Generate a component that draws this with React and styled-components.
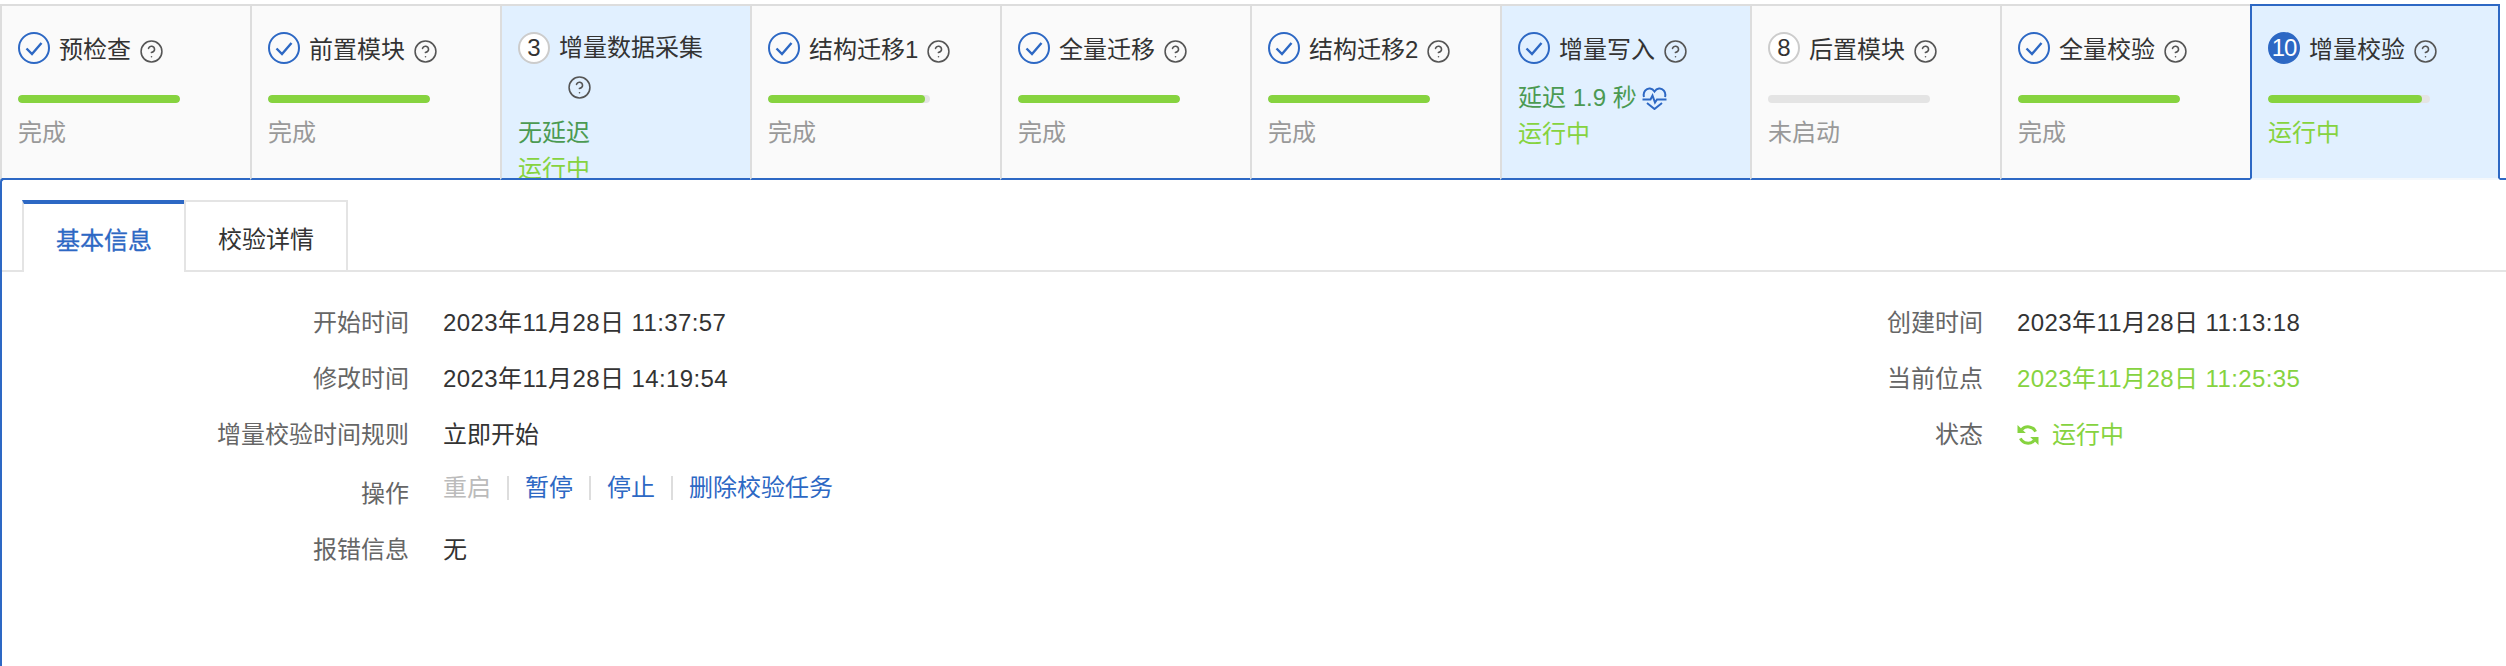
import React from 'react';
import styled, { createGlobalStyle } from 'styled-components';
import { CircleHelp } from 'lucide-react';

const BLUE = '#2d68c4';
const GREEN = '#86d33f';

const GlobalStyle = createGlobalStyle`
  html, body { margin: 0; padding: 0; background: #fff; }
  body {
    font-family: "Liberation Sans", "Noto Sans CJK SC", sans-serif;
    font-size: 24px;
    color: #333;
  }
`;

const Page = styled.div`
  display: flex;
  flex-direction: column;
  height: 666px;
  overflow: hidden;
  padding-top: 4px;
  box-sizing: border-box;
`;

const StepRow = styled.div`
  display: flex;
  flex: 0 0 176px;
  position: relative;
  z-index: 1;
`;

const Step = styled.div`
  flex: 0 0 250px;
  box-sizing: border-box;
  height: 176px;
  overflow: hidden;
  padding: 26px 0 0 16px;
  border-style: solid;
  border-width: 2px ${p => (p.$selected ? '2px' : '0')} 2px 2px;
  border-color: ${p => (p.$selected ? `${BLUE} ${BLUE} #f4f8fc ${BLUE}` : `#ddd #ddd ${BLUE} #ddd`)};
  background: ${p => (p.$running ? '#e1f0ff' : '#fafafa')};
`;

const StepHead = styled.div`
  display: flex;
  align-items: flex-start;
  margin-bottom: ${p => (p.$wrapped ? '10px' : '11px')};
`;

const Badge = styled.span`
  flex: 0 0 32px;
  width: 32px;
  height: 32px;
  box-sizing: border-box;
  border-radius: 50%;
  display: flex;
  align-items: center;
  justify-content: center;
  font-size: 24px;
  letter-spacing: ${p => (p.$filled ? '-1px' : '0')};
  color: ${p => (p.$filled ? '#fff' : '#333')};
  background: ${p => (p.$filled ? BLUE : '#fff')};
  border: 2px solid ${p => (p.$filled ? BLUE : '#ccc')};
`;

const CheckBadge = styled.svg`
  flex: 0 0 32px;
  width: 32px;
  height: 32px;
`;

const StepTitle = styled.div`
  margin: ${p => (p.$wrapped ? '-3px' : '-1px')} 0 0 9px;
  max-width: 165px;
  line-height: 38px;
  color: #333;
`;

const HelpIcon = styled(CircleHelp)`
  display: inline-block;
  vertical-align: -6px;
  margin-left: 8px;
  color: #555;
`;

const BarRow = styled.div`
  height: 35px;
  box-sizing: border-box;
  padding-top: 15px;
`;

const BarTrack = styled.div`
  width: 162px;
  height: 8px;
  border-radius: 4px;
  background: #e4e4e4;
  overflow: hidden;
`;

const BarFill = styled.div`
  height: 100%;
  border-radius: 4px;
  background: ${GREEN};
`;

const DelayRow = styled.div`
  display: flex;
  align-items: center;
  height: 36px;
  line-height: 36px;
  color: #4b9a52;
`;

const HeartIcon = styled.svg`
  width: 25px;
  height: 23px;
  margin-left: 5px;
  flex: none;
`;

const StepStatus = styled.div`
  line-height: 36px;
  color: ${p => p.$color};
`;

const Panel = styled.div`
  flex: 1;
  margin-top: -2px;
  border-top: 2px solid ${BLUE};
  border-left: 2px solid ${BLUE};
  border-top-left-radius: 4px;
  padding-top: 20px;
`;

const TabBar = styled.div`
  display: flex;
  height: 70px;
  padding-left: 20px;
  border-bottom: 2px solid #e4e4e4;
`;

const Tab = styled.div`
  flex: 0 0 ${p => p.$width}px;
  box-sizing: border-box;
  height: ${p => (p.$active ? '72px' : '70px')};
  display: flex;
  align-items: center;
  justify-content: center;
  border-style: solid;
  border-color: ${p => (p.$active ? `${BLUE} transparent #fff #e4e4e4` : '#e4e4e4')};
  border-width: ${p => (p.$active ? '4px 0 0 2px' : '2px 2px 0 2px')};
  padding-top: ${p => (p.$active ? '0' : '2px')};
  background: #fff;
  color: ${p => (p.$active ? BLUE : '#333')};
  -webkit-text-stroke: ${p => (p.$active ? '0.3px' : '0')};
`;

const Details = styled.div`
  display: grid;
  grid-template-columns: 1252px 1fr;
  padding-top: 33px;
`;

const Column = styled.div`
  display: flex;
  flex-direction: column;
`;

const InfoRow = styled.div`
  display: flex;
  align-items: flex-start;
  margin-bottom: 20px;
  line-height: 36px;
`;

const Label = styled.div`
  flex: 0 0 ${p => p.$width}px;
  text-align: right;
  margin-top: ${p => p.$offset || 0}px;
  color: #666;
`;

const Value = styled.div`
  display: flex;
  align-items: center;
  margin-left: 34px;
  margin-top: ${p => p.$offset || 0}px;
  letter-spacing: ${p => (p.$date ? '0.4px' : '0')};
  color: ${p => p.$color || '#333'};
`;

const Action = styled.span`
  color: ${p => (p.$disabled ? '#bbb' : BLUE)};
`;

const ActionDivider = styled.span`
  width: 2px;
  height: 24px;
  margin: 0 16px;
  background: #ddd;
`;

const SyncIcon = styled.svg`
  width: 22px;
  height: 22px;
  margin-right: 13px;
  flex: none;
`;

const steps = [
  { name: '预检查', done: true, progress: 100, status: '完成' },
  { name: '前置模块', done: true, progress: 100, status: '完成' },
  { name: '增量数据采集', no: 3, wrapped: true, running: true, delay: '无延迟', status: '运行中' },
  { name: '结构迁移1', done: true, progress: 97, status: '完成' },
  { name: '全量迁移', done: true, progress: 100, status: '完成' },
  { name: '结构迁移2', done: true, progress: 100, status: '完成' },
  { name: '增量写入', done: true, running: true, delay: '延迟 1.9 秒', heart: true, status: '运行中' },
  { name: '后置模块', no: 8, progress: 0, status: '未启动' },
  { name: '全量校验', done: true, progress: 100, status: '完成' },
  { name: '增量校验', no: 10, filled: true, selected: true, running: true, progress: 95, status: '运行中' },
];

const Check = () => (
  <CheckBadge viewBox="0 0 32 32" fill="none">
    <circle cx="16" cy="16" r="15" stroke={BLUE} strokeWidth="2" />
    <path d="M8.5 16.5 L14 22 L23.5 11" stroke={BLUE} strokeWidth="2.4" />
  </CheckBadge>
);

const Heart = () => (
  <HeartIcon viewBox="0 0 25 23" fill="none" stroke={BLUE} strokeWidth="2">
    <path d="M2 10 C0.5 5 4.5 1 8 1.5 C10 1.8 11.5 3 12.5 4.5 C13.5 3 15 1.8 17 1.5 C20.5 1 24.5 5 23 10" />
    <path d="M0.5 12.5 H8.5 L10.5 8.5 L13 15.5 L15 12.5 H24.5" />
    <path d="M5 16 L12.5 22 L20 16" />
  </HeartIcon>
);

const Sync = () => (
  <SyncIcon viewBox="0 0 22 22" fill="none">
    <path d="M18.6 7.6 A8.4 8.4 0 0 0 4.8 5.6" stroke={GREEN} strokeWidth="3" />
    <path d="M0.5 1 L8.8 9 H0.5 Z" fill={GREEN} />
    <path d="M3.4 14.4 A8.4 8.4 0 0 0 17.2 16.4" stroke={GREEN} strokeWidth="3" />
    <path d="M21.5 21 L13.2 13 H21.5 Z" fill={GREEN} />
  </SyncIcon>
);

const statusColor = s => (s === '运行中' ? GREEN : '#999');

const StepCard = ({ step }) => (
  <Step $selected={step.selected} $running={step.running}>
    <StepHead $wrapped={step.wrapped}>
      {step.done ? <Check /> : <Badge $filled={step.filled}>{step.no}</Badge>}
      <StepTitle $wrapped={step.wrapped}>
        {step.name}
        <HelpIcon size={25} strokeWidth={1.5} />
      </StepTitle>
    </StepHead>
    {step.delay ? (
      <DelayRow>
        {step.delay}
        {step.heart && <Heart />}
      </DelayRow>
    ) : (
      <BarRow>
        <BarTrack>
          <BarFill style={{ width: `${step.progress}%` }} />
        </BarTrack>
      </BarRow>
    )}
    <StepStatus $color={statusColor(step.status)}>{step.status}</StepStatus>
  </Step>
);

export default function App() {
  return (
    <Page>
      <GlobalStyle />
      <StepRow>
        {steps.map(s => <StepCard key={s.name} step={s} />)}
      </StepRow>
      <Panel>
        <TabBar>
          <Tab $active $width={162}>基本信息</Tab>
          <Tab $width={164}>校验详情</Tab>
        </TabBar>
        <Details>
          <Column>
            <InfoRow><Label $width={407}>开始时间</Label><Value $date>2023年11月28日 11:37:57</Value></InfoRow>
            <InfoRow><Label $width={407}>修改时间</Label><Value $date>2023年11月28日 14:19:54</Value></InfoRow>
            <InfoRow><Label $width={407}>增量校验时间规则</Label><Value>立即开始</Value></InfoRow>
            <InfoRow>
              <Label $width={407} $offset={3}>操作</Label>
              <Value $offset={-3}>
                <Action $disabled>重启</Action>
                <ActionDivider />
                <Action>暂停</Action>
                <ActionDivider />
                <Action>停止</Action>
                <ActionDivider />
                <Action>删除校验任务</Action>
              </Value>
            </InfoRow>
            <InfoRow><Label $width={407}>报错信息</Label><Value>无</Value></InfoRow>
          </Column>
          <Column>
            <InfoRow><Label $width={729}>创建时间</Label><Value $date>2023年11月28日 11:13:18</Value></InfoRow>
            <InfoRow><Label $width={729}>当前位点</Label><Value $date $color={GREEN}>2023年11月28日 11:25:35</Value></InfoRow>
            <InfoRow><Label $width={729}>状态</Label><Value $color={GREEN}><Sync />运行中</Value></InfoRow>
          </Column>
        </Details>
      </Panel>
    </Page>
  );
}
